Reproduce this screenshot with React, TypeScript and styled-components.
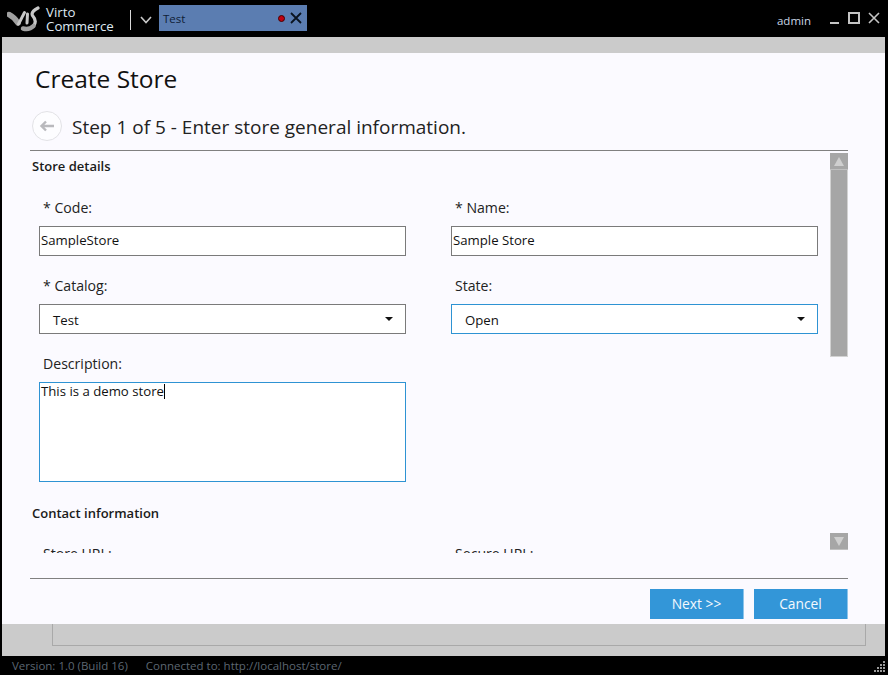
import React from 'react';
import styled, { createGlobalStyle } from 'styled-components';

const GlobalStyle = createGlobalStyle`
  html, body {
    margin: 0;
    padding: 0;
    background: #000;
  }
  * {
    box-sizing: border-box;
  }
`;

const Page = styled.div`
  width: 888px;
  height: 675px;
  display: flex;
  flex-direction: column;
  overflow: hidden;
  background: #000;
  font-family: "Open Sans", "Liberation Sans", sans-serif;
  color: #1a1a1a;
`;

// Top bar
const TopBar = styled.div`
  height: 37px;
  flex: none;
  display: flex;
  align-items: flex-start;
  padding: 5px 8px 0 7px;
  color: #dfe8f2;
`;

const Logo = styled.svg`
  width: 33px;
  height: 28px;
  margin-right: 6px;
  flex: none;
`;

const Brand = styled.div`
  width: 84px;
  font-size: 13.3px;
  line-height: 14px;
`;

const Divider = styled.div`
  width: 1px;
  height: 20px;
  margin-top: 5px;
  background: #d8d8d8;
`;

const Chevron = styled.svg`
  width: 12px;
  height: 8px;
  margin: 11px 7px 0 9px;
  flex: none;
`;

const Tab = styled.div`
  width: 148px;
  height: 26px;
  display: flex;
  align-items: center;
  padding: 0 5px 0 4px;
  background: #5b7db1;
  color: #0f2036;
  font-size: 11.5px;
`;

const TabTitle = styled.span`
  flex: 1;
`;

const RedDot = styled.span`
  width: 7px;
  height: 7px;
  border-radius: 50%;
  background: #c00010;
  border: 1px solid #400;
  margin-right: 5px;
`;

const User = styled.div`
  margin-left: auto;
  margin-top: 8px;
  font-size: 11.5px;
  color: #c9d6e6;
`;

const WinIcons = styled.div`
  display: flex;
  align-items: flex-start;
  gap: 8px;
  margin: 7px 0 0 17px;
`;

const WinIcon = styled.svg`
  width: 12px;
  height: 12px;
  flex: none;
`;

// Gray strips
const Band = styled.div`
  height: 16px;
  flex: none;
  margin: 0 3px 0 2px;
  background: #cbcbcb;
`;

const LowerBand = styled.div`
  height: 32px;
  flex: none;
  margin: 0 3px 0 2px;
  padding: 0 19px 10px 50px;
  background: #cbcbcb;
`;

const BehindPanel = styled.div`
  height: 100%;
  border: 1px solid #a9a9a9;
  border-top: none;
`;

// Dialog
const Dialog = styled.div`
  height: 571px;
  flex: none;
  margin: 0 3px 0 2px;
  padding: 0 37px 0 28px;
  display: flex;
  flex-direction: column;
  background: #fbfaff;
`;

const Title = styled.h1`
  margin: 8px 0 0 5px;
  height: 36px;
  font-size: 24.5px;
  line-height: 36px;
  font-weight: 400;
  color: #111;
`;

const StepRow = styled.div`
  display: flex;
  align-items: center;
  margin: 14px 0 0 2px;
  height: 30px;
`;

const BackButton = styled.div`
  width: 30px;
  height: 30px;
  border-radius: 50%;
  border: 1px solid #e2e2e6;
  background: #fdfdff;
  display: flex;
  align-items: center;
  justify-content: center;
  margin-right: 10px;
`;

const StepText = styled.div`
  padding-top: 2px;
  font-size: 19px;
  color: #222;
`;

const Rule = styled.div`
  height: 1px;
  flex: none;
  background: #808080;
`;

const TopRule = styled(Rule)`
  margin-top: 9px;
`;

const Body = styled.div`
  height: 427px;
  flex: none;
  display: flex;
  justify-content: space-between;
`;

const ScrollArea = styled.div`
  width: 790px;
  height: 402px;
  overflow: hidden;
`;

const SectionTitle = styled.div<{ $top: number }>`
  margin: ${(p) => p.$top}px 0 0 2px;
  font-size: 13px;
  line-height: 18px;
  font-weight: 600;
  color: #1a1a1a;
`;

const FormGrid = styled.div<{ $top: number }>`
  display: grid;
  grid-template-columns: 367px 367px;
  column-gap: 45px;
  row-gap: 19px;
  margin: ${(p) => p.$top}px 0 0 9px;
`;

const Field = styled.div``;

const Label = styled.div`
  height: 21px;
  margin-bottom: 8px;
  padding: 1px 0 0 4px;
  font-size: 14.1px;
  line-height: 20px;
  color: #222;
`;

const Input = styled.input`
  display: block;
  width: 100%;
  height: 30px;
  padding: 0 1px 2px;
  border: 1px solid #7a7a7a;
  border-radius: 0;
  background: #fff;
  font: inherit;
  font-size: 13.2px;
  color: #111;
  outline: none;
`;

const Select = styled.div<{ $focused?: boolean }>`
  height: 30px;
  display: flex;
  align-items: center;
  justify-content: space-between;
  padding: 1px 12px 0 13px;
  border: 1px solid ${(p) => (p.$focused ? '#2e93d3' : '#7a7a7a')};
  background: #fff;
  font-size: 13.2px;
  color: #111;
`;

const Caret = styled.span`
  width: 0;
  height: 0;
  margin-top: -1px;
  border-left: 4px solid transparent;
  border-right: 4px solid transparent;
  border-top: 4px solid #111;
`;

const TextBox = styled.div`
  height: 100px;
  padding: 0 1px;
  border: 1px solid #2e93d3;
  background: #fff;
  font-size: 13.2px;
  line-height: 16px;
  color: #111;
`;

const TextCursor = styled.span`
  display: inline-block;
  width: 1px;
  height: 15px;
  background: #000;
  vertical-align: -3px;
`;

// Scrollbar
const ScrollBar = styled.div`
  width: 18px;
  height: 397px;
  margin-top: 2px;
  display: flex;
  flex-direction: column;
  justify-content: space-between;
`;

const Thumb = styled.div`
  height: 187px;
  background: #a6a6a6;
  border: 1px solid #d2d2d2;
  border-top: none;
`;

const ScrollButton = styled.div`
  width: 18px;
  height: 17px;
  display: flex;
  align-items: center;
  justify-content: center;
  background: #a6a6a6;
  border-bottom: 1px solid #c0c0c0;
`;

const ArrowUp = styled.span`
  width: 0;
  height: 0;
  border-left: 5px solid transparent;
  border-right: 5px solid transparent;
  border-bottom: 9px solid #cfcfcf;
`;

const ArrowDown = styled.span`
  width: 0;
  height: 0;
  border-left: 5px solid transparent;
  border-right: 5px solid transparent;
  border-top: 9px solid #cfcfcf;
`;

// Footer
const Footer = styled.div`
  display: flex;
  justify-content: flex-end;
  gap: 10px;
  margin-top: 10px;
`;

const Button = styled.button`
  width: 94px;
  height: 30px;
  padding: 0 0 2px;
  border: none;
  border-right: 1px solid #8cc4ea;
  border-radius: 0;
  background: #3396d8;
  color: #f4f9fd;
  font: inherit;
  font-size: 13.8px;
`;

// Status bar
const StatusBar = styled.div`
  flex: 1;
  display: flex;
  align-items: center;
  gap: 18px;
  padding: 0 0 0 12px;
  font-size: 11.5px;
  color: #5c6672;
  position: relative;
`;

const Grip = styled.svg`
  position: absolute;
  right: 2px;
  bottom: 2px;
  width: 12px;
  height: 12px;
`;

const gripDots = [
  [9, 0],
  [6, 3],
  [9, 3],
  [3, 6],
  [6, 6],
  [9, 6],
  [0, 9],
  [3, 9],
  [6, 9],
  [9, 9],
];

export default function App() {
  return (
    <Page>
      <GlobalStyle />
      <TopBar>
        <Logo viewBox="0 0 33 28" fill="none" strokeLinecap="round">
          <path d="M2 9.5 C5 11 8.5 14 11 18" stroke="#a0a0a0" strokeWidth="5.5" />
          <path d="M11.5 19 C14 15 15.5 11 17.5 7.5" stroke="#c8c8c8" strokeWidth="3" />
          <path d="M20.5 9 L20 18" stroke="#c8c8c8" strokeWidth="3" />
          <path d="M31 3 C27 5 24 7.5 25.5 10.5 C28.5 14 29 18 26.5 21" stroke="#c8c8c8" strokeWidth="3.2" />
          <path d="M26.5 21 C24 23.5 20 24.5 16 23.5" stroke="#a0a0a0" strokeWidth="4.5" />
        </Logo>
        <Brand>
          Virto
          <br />
          Commerce
        </Brand>
        <Divider />
        <Chevron viewBox="0 0 12 8" fill="none" stroke="#c8c8c8" strokeWidth="1.6">
          <path d="M1 1 L6 6.5 L11 1" />
        </Chevron>
        <Tab>
          <TabTitle>Test</TabTitle>
          <RedDot />
          <svg width="12" height="12" viewBox="0 0 12 12" stroke="#0a1420" strokeWidth="1.8">
            <path d="M1 1 L11 11 M11 1 L1 11" />
          </svg>
        </Tab>
        <User>admin</User>
        <WinIcons>
          <WinIcon viewBox="0 0 12 12" stroke="#c4c4c4" strokeWidth="2" fill="none">
            <path d="M2 11 H11" />
          </WinIcon>
          <WinIcon viewBox="0 0 12 12" stroke="#c4c4c4" strokeWidth="2" fill="none">
            <rect x="1" y="1" width="10" height="10" />
          </WinIcon>
          <WinIcon viewBox="0 0 12 12" stroke="#c4c4c4" strokeWidth="1.6" fill="none">
            <path d="M1 1 L11 11 M11 1 L1 11" />
          </WinIcon>
        </WinIcons>
      </TopBar>
      <Band />
      <Dialog>
        <Title>Create Store</Title>
        <StepRow>
          <BackButton>
            <svg width="16" height="12" viewBox="0 0 16 12" fill="none" stroke="#b9b9bd" strokeWidth="2.4">
              <path d="M15 6 H3 M7 1.5 L2.5 6 L7 10.5" />
            </svg>
          </BackButton>
          <StepText>Step 1 of 5 - Enter store general information.</StepText>
        </StepRow>
        <TopRule />
        <Body>
          <ScrollArea>
            <SectionTitle $top={6}>Store details</SectionTitle>
            <FormGrid $top={22}>
              <Field>
                <Label>* Code:</Label>
                <Input readOnly value="SampleStore" />
              </Field>
              <Field>
                <Label>* Name:</Label>
                <Input readOnly value="Sample Store" />
              </Field>
              <Field>
                <Label>* Catalog:</Label>
                <Select>
                  Test
                  <Caret />
                </Select>
              </Field>
              <Field>
                <Label>State:</Label>
                <Select $focused>
                  Open
                  <Caret />
                </Select>
              </Field>
              <Field>
                <Label>Description:</Label>
                <TextBox>
                  This is a demo store
                  <TextCursor />
                </TextBox>
              </Field>
            </FormGrid>
            <SectionTitle $top={22}>Contact information</SectionTitle>
            <FormGrid $top={21}>
              <Field>
                <Label>Store URL:</Label>
              </Field>
              <Field>
                <Label>Secure URL:</Label>
              </Field>
            </FormGrid>
          </ScrollArea>
          <ScrollBar>
            <div>
              <ScrollButton>
                <ArrowUp />
              </ScrollButton>
              <Thumb />
            </div>
            <ScrollButton>
              <ArrowDown />
            </ScrollButton>
          </ScrollBar>
        </Body>
        <Rule />
        <Footer>
          <Button>Next &gt;&gt;</Button>
          <Button>Cancel</Button>
        </Footer>
      </Dialog>
      <LowerBand>
        <BehindPanel />
      </LowerBand>
      <StatusBar>
        <span>Version: 1.0 (Build 16)</span>
        <span>Connected to: http://localhost/store/</span>
        <Grip viewBox="0 0 12 12" fill="#9a9a9a">
          {gripDots.map(([x, y]) => (
            <rect key={`${x}-${y}`} x={x} y={y} width="2" height="2" />
          ))}
        </Grip>
      </StatusBar>
    </Page>
  );
}
